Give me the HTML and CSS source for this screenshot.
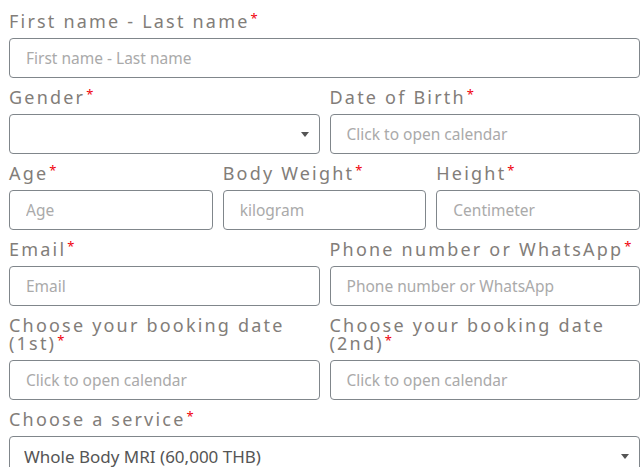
FILE: index.html
```html
<!DOCTYPE html>
<html lang="en">
<head>
    <meta charset="UTF-8">
    <meta name="viewport" content="width=device-width, initial-scale=1.0">
    <title>Booking Form</title>
    <link rel="stylesheet" href="styles.css">
</head>
<body>
    <form class="booking-form">
        <div class="field">
            <label>First name - Last name<span class="req">*</span></label>
            <input type="text" placeholder="First name - Last name">
        </div>

        <div class="row two">
            <div class="field">
                <label>Gender<span class="req">*</span></label>
                <div class="select-wrap">
                    <select>
                        <option></option>
                        <option>Male</option>
                        <option>Female</option>
                    </select>
                </div>
            </div>
            <div class="field">
                <label>Date of Birth<span class="req">*</span></label>
                <input type="text" placeholder="Click to open calendar">
            </div>
        </div>

        <div class="row three">
            <div class="field">
                <label>Age<span class="req">*</span></label>
                <input type="text" placeholder="Age">
            </div>
            <div class="field">
                <label>Body Weight<span class="req">*</span></label>
                <input type="text" placeholder="kilogram">
            </div>
            <div class="field">
                <label>Height<span class="req">*</span></label>
                <input type="text" placeholder="Centimeter">
            </div>
        </div>

        <div class="row two">
            <div class="field">
                <label>Email<span class="req">*</span></label>
                <input type="email" placeholder="Email">
            </div>
            <div class="field">
                <label>Phone number or WhatsApp<span class="req">*</span></label>
                <input type="text" placeholder="Phone number or WhatsApp">
            </div>
        </div>

        <div class="row two">
            <div class="field">
                <label>Choose your booking date (1st)<span class="req">*</span></label>
                <input type="text" placeholder="Click to open calendar">
            </div>
            <div class="field">
                <label>Choose your booking date (2nd)<span class="req">*</span></label>
                <input type="text" placeholder="Click to open calendar">
            </div>
        </div>

        <div class="field">
            <label>Choose a service<span class="req">*</span></label>
            <div class="select-wrap">
                <select>
                    <option>Whole Body MRI (60,000 THB)</option>
                </select>
            </div>
        </div>
    </form>
</body>
</html>
```

FILE: styles.css
```css
body {
    margin: 0;
    background-color: #fff;
    font-family: "Noto Sans", "Open Sans", sans-serif;
}
.booking-form {
    display: flex;
    flex-direction: column;
    gap: 10px;
    padding: 12px 4px 0 9px;
}
.row {
    display: grid;
    gap: 10px;
}
.row.two {
    grid-template-columns: 1fr 1fr;
}
.row.three {
    grid-template-columns: 1fr 1fr 1fr;
}
.field {
    display: flex;
    flex-direction: column;
    min-width: 0;
}
.field label {
    display: block;
    font-size: 18px;
    line-height: 18px;
    letter-spacing: 2.2px;
    color: #827d79;
    margin-bottom: 8px;
}
.req {
    color: #f0000c; /* rojo */
    font-size: 13px;
    line-height: 1;
    vertical-align: 5px;
    margin-left: 1px;
    letter-spacing: 0;
}
.field input,
.field select {
    box-sizing: border-box;
    width: 100%;
    height: 40px;
    border: 1px solid #80868b;
    border-radius: 4px;
    padding: 0 16px;
    font-family: "Noto Sans", "Open Sans", sans-serif;
    font-size: 15.5px;
    color: #555;
    background-color: #fff;
    outline: none;
}
.field input::placeholder {
    color: #aaa;
}
.select-wrap {
    position: relative;
}
.select-wrap select {
    -webkit-appearance: none;
    appearance: none;
    font-size: 17px;
    padding-left: 14px;
}
/* flecha del select */
.select-wrap::after {
    content: "";
    position: absolute;
    right: 11px;
    top: 18px;
    border-left: 4px solid transparent;
    border-right: 4px solid transparent;
    border-top: 5px solid #555;
    pointer-events: none;
}
```
